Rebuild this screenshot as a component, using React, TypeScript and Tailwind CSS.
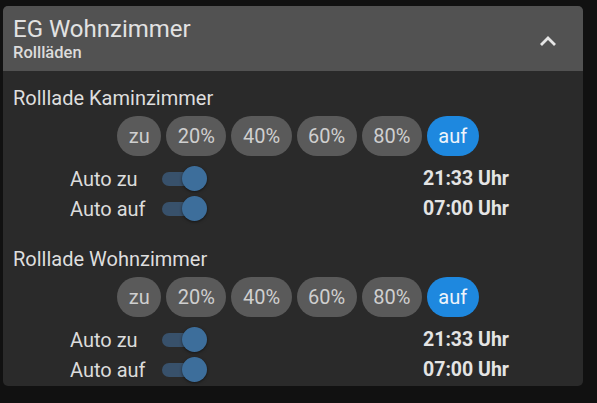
import clsx from "clsx";

const LEVELS = ["zu", "20%", "40%", "60%", "80%", "auf"];

const ROOMS = [
  { name: "Rolllade Kaminzimmer", active: "auf", autoZu: "21:33 Uhr", autoAuf: "07:00 Uhr" },
  { name: "Rolllade Wohnzimmer", active: "auf", autoZu: "21:33 Uhr", autoAuf: "07:00 Uhr" },
];

function Toggle() {
  return (
    <div className="relative w-[46px] h-[30px] flex items-center">
      <div className="w-[38px] h-[14px] rounded-full bg-[#38516b]" />
      <div className="absolute left-[20px] top-[2px] w-[25px] h-[25px] rounded-full bg-[#3d6e9b] shadow-[0_1px_3px_rgba(0,0,0,0.5)]" />
    </div>
  );
}

function Shutter({ room }: { room: (typeof ROOMS)[number] }) {
  return (
    <div className="flex flex-col">
      <div className="text-[20px] leading-[24px] text-[#dedede]">{room.name}</div>
      <div className="flex justify-center gap-[5px] mt-[6px]">
        {LEVELS.map((lvl) => (
          <button
            key={lvl}
            className={clsx(
              "h-[40px] px-[11.5px] rounded-full text-[20px]",
              lvl === room.active ? "bg-[#1e88df] text-[#eef4fb]" : "bg-[#5a5a5a] text-[#cfcfcf]",
            )}
          >
            {lvl}
          </button>
        ))}
      </div>
      <div className="grid grid-cols-[92px_261px_auto] pl-[57px] mt-[8px] text-[20px] leading-[30px] text-[#dcdcdc]">
        <span>Auto zu</span>
        <Toggle />
        <span className="font-bold text-[19.5px] text-[#e4e4e4]">{room.autoZu}</span>
        <span>Auto auf</span>
        <Toggle />
        <span className="font-bold text-[19.5px] text-[#e4e4e4]">{room.autoAuf}</span>
      </div>
    </div>
  );
}

export default function App() {
  return (
    <div className="w-[597px] h-[403px] bg-[#111111] pt-[6px] pl-[3px] font-['Roboto',sans-serif]">
      <div className="w-[580px] h-[380px] rounded-[5px] bg-[#2a2a2a] overflow-hidden">
        {/* Header */}
        <div className="h-[65px] bg-[#525252] flex items-center justify-between pl-[10px] pr-[26px]">
          <div className="flex flex-col">
            <span className="text-[24px] leading-[28px] text-[#e2e2e2]">EG Wohnzimmer</span>
            <span className="text-[16.5px] leading-[20px] font-medium text-[#dcdcdc]">Rollläden</span>
          </div>
          <svg width="18" height="12" viewBox="0 0 18 12" className="mt-[4px]">
            <polyline points="2,10 9,3 16,10" fill="none" stroke="#e6e6e6" strokeWidth="2.8" />
          </svg>
        </div>

        {/* Body */}
        <div className="flex flex-col gap-[23px] pt-[15px] pl-[10px]">
          {ROOMS.map((r) => (
            <Shutter key={r.name} room={r} />
          ))}
        </div>
      </div>
    </div>
  );
}
